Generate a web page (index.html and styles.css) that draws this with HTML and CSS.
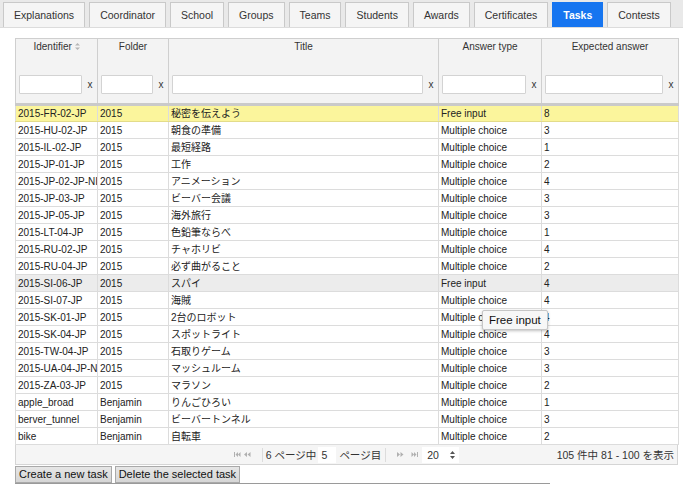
FILE: index.html
```html
<!DOCTYPE html>
<html>
<head>
<meta charset="utf-8">
<link rel="stylesheet" href="styles.css">
</head>
<body>
<div class="tabs">
  <div class="tab">Explanations</div>
  <div class="tab">Coordinator</div>
  <div class="tab">School</div>
  <div class="tab">Groups</div>
  <div class="tab">Teams</div>
  <div class="tab">Students</div>
  <div class="tab">Awards</div>
  <div class="tab">Certificates</div>
  <div class="tab active">Tasks</div>
  <div class="tab">Contests</div>
</div>

<div class="grid">
  <table class="tbl">
    <colgroup>
      <col class="c1"><col class="c2"><col class="c3"><col class="c4"><col class="c5">
    </colgroup>
    <thead>
      <tr class="labels">
        <th>Identifier <svg class="sort" width="5" height="7" viewBox="0 0 5 7"><path d="M2.5 0 L5 2.6 L0 2.6 Z M0 4.4 L5 4.4 L2.5 7 Z" fill="#b5b5b5"/></svg></th>
        <th>Folder</th>
        <th>Title</th>
        <th>Answer type</th>
        <th>Expected answer</th>
      </tr>
      <tr class="filters">
        <th><div class="flt"><input class="fin" type="text"><span class="clr">x</span></div></th>
        <th><div class="flt"><input class="fin" type="text"><span class="clr">x</span></div></th>
        <th><div class="flt"><input class="fin" type="text"><span class="clr">x</span></div></th>
        <th><div class="flt"><input class="fin" type="text"><span class="clr">x</span></div></th>
        <th><div class="flt"><input class="fin" type="text"><span class="clr">x</span></div></th>
      </tr>
    </thead>
    <tbody>
      <tr class="sel"><td>2015-FR-02-JP</td><td>2015</td><td>秘密を伝えよう</td><td>Free input</td><td>8</td></tr>
      <tr><td>2015-HU-02-JP</td><td>2015</td><td>朝食の準備</td><td>Multiple choice</td><td>3</td></tr>
      <tr><td>2015-IL-02-JP</td><td>2015</td><td>最短経路</td><td>Multiple choice</td><td>1</td></tr>
      <tr><td>2015-JP-01-JP</td><td>2015</td><td>工作</td><td>Multiple choice</td><td>2</td></tr>
      <tr><td>2015-JP-02-JP-NI</td><td>2015</td><td>アニメーション</td><td>Multiple choice</td><td>4</td></tr>
      <tr><td>2015-JP-03-JP</td><td>2015</td><td>ビーバー会議</td><td>Multiple choice</td><td>3</td></tr>
      <tr><td>2015-JP-05-JP</td><td>2015</td><td>海外旅行</td><td>Multiple choice</td><td>3</td></tr>
      <tr><td>2015-LT-04-JP</td><td>2015</td><td>色鉛筆ならべ</td><td>Multiple choice</td><td>1</td></tr>
      <tr><td>2015-RU-02-JP</td><td>2015</td><td>チャホリビ</td><td>Multiple choice</td><td>4</td></tr>
      <tr><td>2015-RU-04-JP</td><td>2015</td><td>必ず曲がること</td><td>Multiple choice</td><td>2</td></tr>
      <tr class="hov"><td>2015-SI-06-JP</td><td>2015</td><td>スパイ</td><td>Free input</td><td>4</td></tr>
      <tr><td>2015-SI-07-JP</td><td>2015</td><td>海賊</td><td>Multiple choice</td><td>4</td></tr>
      <tr><td>2015-SK-01-JP</td><td>2015</td><td>2台のロボット</td><td>Multiple choice</td><td>4</td></tr>
      <tr><td>2015-SK-04-JP</td><td>2015</td><td>スポットライト</td><td>Multiple choice</td><td>4</td></tr>
      <tr><td>2015-TW-04-JP</td><td>2015</td><td>石取りゲーム</td><td>Multiple choice</td><td>3</td></tr>
      <tr><td>2015-UA-04-JP-N</td><td>2015</td><td>マッシュルーム</td><td>Multiple choice</td><td>3</td></tr>
      <tr><td>2015-ZA-03-JP</td><td>2015</td><td>マラソン</td><td>Multiple choice</td><td>2</td></tr>
      <tr><td>apple_broad</td><td>Benjamin</td><td>りんごひろい</td><td>Multiple choice</td><td>1</td></tr>
      <tr><td>berver_tunnel</td><td>Benjamin</td><td>ビーバートンネル</td><td>Multiple choice</td><td>3</td></tr>
      <tr><td>bike</td><td>Benjamin</td><td>自転車</td><td>Multiple choice</td><td>2</td></tr>
    </tbody>
  </table>
  <div class="pager">
    <div class="pside"></div>
    <div class="pcenter">
      <svg class="pico first" width="7" height="5" viewBox="0 0 7 5"><path d="M0 0 H1 V5 H0 Z M1.5 2.5 L4 0 V5 Z M4 2.5 L6.5 0 V5 Z" fill="#b0b0b0"/></svg>
      <svg class="pico prev" width="7" height="5" viewBox="0 0 7 5"><path d="M0 2.5 L3 0 V5 Z M3.5 2.5 L6.5 0 V5 Z" fill="#b0b0b0"/></svg>
      <span class="psep"></span>
      <span class="ptxt total">6 ページ中</span>
      <span class="pbox">5</span>
      <span class="ptxt unit">ページ目</span>
      <span class="psep right"></span>
      <svg class="pico next" width="7" height="5" viewBox="0 0 7 5"><path d="M0 0 L3 2.5 L0 5 Z M3.5 0 L6.5 2.5 L3.5 5 Z" fill="#b0b0b0"/></svg>
      <svg class="pico last" width="7" height="5" viewBox="0 0 7 5"><path d="M0.5 0 L3 2.5 L0.5 5 Z M3 0 L5.5 2.5 L3 5 Z M6 0 H7 V5 H6 Z" fill="#b0b0b0"/></svg>
      <span class="psel">20 <svg width="5" height="8" viewBox="0 0 5 8"><path d="M2.5 0 L5 3 L0 3 Z M0 5 L5 5 L2.5 8 Z" fill="#555"/></svg></span>
    </div>
    <div class="pinfo">105 件中 81 - 100 を表示</div>
  </div>
</div>

<div class="actions">
  <button class="btn">Create a new task</button>
  <button class="btn">Delete the selected task</button>
</div>

<div class="tooltip">Free input</div>
</body>
</html>
```

FILE: styles.css
```css
html, body {
  margin: 0;
  padding: 0;
  background: #ffffff;
  font-family: "Liberation Sans", Arial, "Noto Sans CJK JP", sans-serif;
  color: #222;
}

.tabs {
  display: flex;
  gap: 4px;
  height: 28px;
  box-sizing: border-box;
  padding: 2px 0 0 3px;
  background: #e9e9e9;
  border-bottom: 1px solid #dcdcdc;
}

.tab {
  display: flex;
  align-items: center;
  padding: 0 10px 1px;
  font-size: 10.5px;
  color: #333;
  background: #f5f5f5;
  border: 1px solid #c9c9c9;
  border-bottom: none;
}

.tab.active {
  background: #1675f0;
  border-color: #1675f0;
  color: #fff;
  font-weight: bold;
}

.grid {
  margin: 10px 0 0 15px;
  width: 663px;
}

.tbl {
  width: 663px;
  table-layout: fixed;
  border-collapse: collapse;
  font-size: 10px;
}

.c1 { width: 82px; }
.c2 { width: 71px; }
.c3 { width: 270px; }
.c4 { width: 103px; }
.c5 { width: 137px; }

.tbl th {
  background: #f3f3f3;
  border-left: 1px solid #cfcfcf;
  border-right: 1px solid #cfcfcf;
  font-weight: normal;
  color: #333;
}

.labels th {
  height: 27px;
  box-sizing: border-box;
  padding: 2px 0 0;
  vertical-align: top;
  text-align: center;
  border-top: 1px solid #cfcfcf;
  line-height: 12px;
}

.sort {
  vertical-align: 0;
}

.filters th {
  height: 39px;
  box-sizing: border-box;
  padding: 0 4px 0 3px;
  border-bottom: 3px solid #cacaca;
}

.flt {
  display: flex;
  align-items: center;
  gap: 5px;
}

.fin {
  flex: 1;
  min-width: 0;
  height: 19px;
  box-sizing: border-box;
  margin: 0;
  border: 1px solid #d3d3d3;
  border-radius: 1px;
  background: #fff;
}

.clr {
  font-size: 10px;
  color: #333;
  width: 6px;
}

.tbl td {
  height: 17px;
  box-sizing: border-box;
  padding: 0 1px 0 2px;
  border: 1px solid #dcdcdc;
  white-space: nowrap;
  overflow: hidden;
  line-height: 15px;
  color: #222;
}

.tbl tr.sel td {
  background: #fbf59c;
  border-top-color: #e3dc8a;
  border-bottom-color: #e3dc8a;
}

.tbl tr.hov td {
  background: #ececec;
}

.pager {
  display: grid;
  grid-template-columns: 1fr auto 1fr;
  align-items: center;
  height: 20px;
  box-sizing: border-box;
  border: 1px solid #d5d5d5;
  border-top: none;
  background: #f5f5f5;
  font-size: 10.5px;
  color: #333;
}

.pcenter {
  display: flex;
  align-items: center;
}

.pico.prev { margin-left: 3px; }
.pico.next { margin-left: 11px; }
.pico.last { margin-left: 7px; }

.psep {
  width: 1px;
  height: 14px;
  background: #dcdcdc;
  margin-left: 11px;
}

.psep.right { margin-left: 4px; }

.ptxt.total { margin-left: 3px; }
.ptxt.unit { margin-left: 3px; }

.pbox {
  background: #fff;
  width: 18px;
  height: 16px;
  box-sizing: border-box;
  padding: 2px 0 0 3px;
  margin-left: 2px;
}

.psel {
  display: flex;
  align-items: center;
  justify-content: space-between;
  background: #fff;
  width: 37px;
  height: 16px;
  box-sizing: border-box;
  padding: 0 4px 0 5px;
  margin-left: 4px;
}

.pinfo {
  justify-self: end;
  padding-right: 3px;
}

.actions {
  display: flex;
  gap: 3px;
  margin: 1px 0 0 15px;
  width: 535px;
  border-bottom: 1px solid #9a9a9a;
}

.btn {
  height: 17px;
  margin: 0;
  padding: 0 3px;
  font-family: "Liberation Sans", Arial, sans-serif;
  font-size: 11px;
  color: #111;
  background: linear-gradient(#e6e6e6, #d6d6d6);
  border: 1px solid #a9a9a9;
  border-radius: 0;
  line-height: 15px;
}

.tooltip {
  position: absolute;
  left: 482px;
  top: 310px;
  width: 66px;
  height: 20px;
  box-sizing: border-box;
  padding: 3px 0 0 6px;
  background: #f7f7f7;
  border: 1px solid #c6c6c6;
  border-radius: 2px;
  box-shadow: 0 1px 3px rgba(0,0,0,0.25);
  font-size: 11.5px;
  line-height: 13px;
  color: #111;
}
```
